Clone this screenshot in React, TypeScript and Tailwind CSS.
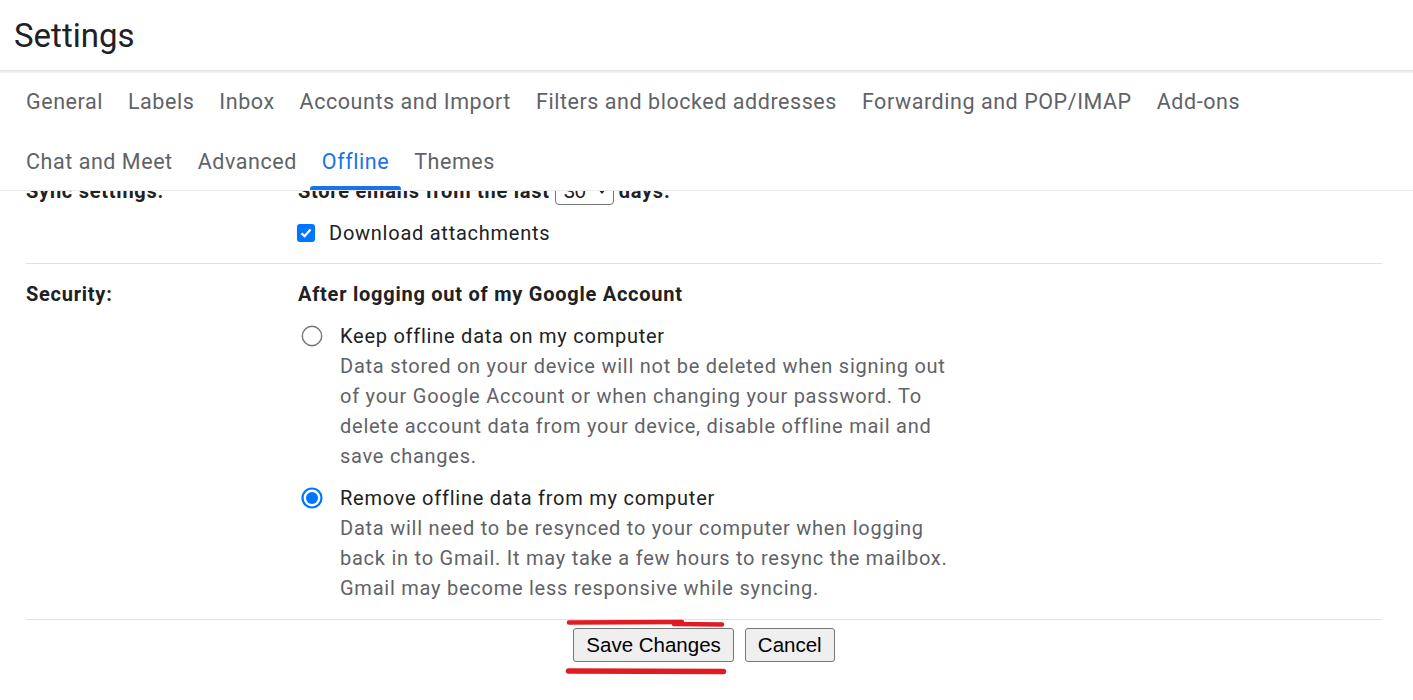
import React from "react";

const tabsRow1 = ["General", "Labels", "Inbox", "Accounts and Import", "Filters and blocked addresses", "Forwarding and POP/IMAP", "Add-ons"];
const tabsRow2 = ["Chat and Meet", "Advanced", "Offline", "Themes"];

function Tab({ label, active }: { label: string; active?: boolean }) {
  return (
    <div className="relative flex items-center px-[12px]">
      <span className={active ? "text-[#1a73e8]" : "text-[#5f6368]"}>{label}</span>
      {active && <div className="absolute left-0 right-0 bottom-0 h-[4px] rounded-t-[3px] bg-[#1a73e8]" />}
    </div>
  );
}

function Radio({ checked }: { checked?: boolean }) {
  return (
    <svg width="22" height="22" viewBox="0 0 22 22" className="shrink-0">
      {checked ? (
        <>
          <circle cx="11" cy="11" r="9.5" fill="white" stroke="#0075ff" strokeWidth="2.2" />
          <circle cx="11" cy="11" r="6" fill="#0075ff" />
        </>
      ) : (
        <circle cx="11" cy="11" r="9.7" fill="white" stroke="#767676" strokeWidth="1.4" />
      )}
    </svg>
  );
}

export default function App() {
  return (
    <div className="w-[1413px] h-[700px] overflow-hidden bg-white flex flex-col font-['Roboto',sans-serif]">
      <div className="h-[70px] shrink-0 flex items-center pl-[14px] text-[33px] text-[#202124] leading-none">
        Settings
      </div>
      <div className="h-[3px] shrink-0 bg-gradient-to-b from-[#e1e3e6] to-[#f4f5f6]" />
      <div className="shrink-0 border-b border-[#e8eaed] px-[14px] text-[21.5px] tracking-[0.55px]">
        <div className="h-[57px] pt-[2px] flex items-stretch gap-[1px]">
          {tabsRow1.map((t) => (
            <Tab key={t} label={t} />
          ))}
        </div>
        <div className="h-[60px] pt-[4px] flex items-stretch gap-[1px]">
          {tabsRow2.map((t) => (
            <Tab key={t} label={t} active={t === "Offline"} />
          ))}
        </div>
      </div>
      <div className="flex-1 overflow-hidden">
        <div className="ml-[26px] mr-[31px] text-[20px] leading-[30px] text-[#202124] tracking-[0.75px]">
          <div className="-mt-[31px] pt-[16px] pb-[15px] border-b border-[#e0e0e0] flex">
            <div className="w-[272px] shrink-0 font-bold">Sync settings:</div>
            <div className="flex flex-col gap-[12px]">
              <div className="flex items-center font-bold">
                <span>Store emails from the last</span>
                <div className="mx-[5px] w-[59px] h-[28px] border border-[#767676] rounded-[4px] flex items-center justify-between pl-[8px] pr-[7px] font-normal tracking-normal font-['Liberation_Sans',sans-serif] text-[20px]">
                  <span>30</span>
                  <svg width="8" height="5" viewBox="0 0 8 5">
                    <path d="M0 0 L8 0 L4 5 Z" fill="#202124" />
                  </svg>
                </div>
                <span>days.</span>
              </div>
              <div className="flex items-center">
                <div className="w-[18px] h-[18px] rounded-[3px] bg-[#0075ff] flex items-center justify-center shrink-0 -ml-[1px]">
                  <svg width="14" height="14" viewBox="0 0 14 14">
                    <path d="M2.5 7.3 L5.6 10.2 L11.5 3.6" fill="none" stroke="white" strokeWidth="2.3" />
                  </svg>
                </div>
                <span className="ml-[14px]">Download attachments</span>
              </div>
            </div>
          </div>
          <div className="pt-[15px] pb-[16px] border-b border-[#e0e0e0] flex">
            <div className="w-[272px] shrink-0 font-bold">Security:</div>
            <div className="flex flex-col">
              <div className="font-bold">After logging out of my Google Account</div>
              <div className="mt-[12px] flex items-center">
                <div className="ml-[3px] w-[22px] flex"><Radio /></div>
                <span className="ml-[17px]">Keep offline data on my computer</span>
              </div>
              <div className="ml-[42px] w-[615px] text-[#5f6368]">
                Data stored on your device will not be deleted when signing out of your Google Account or when changing your password. To delete account data from your device, disable offline mail and save changes.
              </div>
              <div className="mt-[12px] flex items-center">
                <div className="ml-[3px] w-[22px] flex"><Radio checked /></div>
                <span className="ml-[17px]">Remove offline data from my computer</span>
              </div>
              <div className="ml-[42px] w-[615px] text-[#5f6368]">
                Data will need to be resynced to your computer when logging back in to Gmail. It may take a few hours to resync the mailbox. Gmail may become less responsive while syncing.
              </div>
            </div>
          </div>
          <div className="pt-[8px] flex justify-center tracking-normal">
            <div className="relative flex gap-[11px] font-['Liberation_Sans',sans-serif] text-[20.5px] leading-none text-black">
              <button className="h-[34px] px-[12px] bg-[#efefef] border border-[#767676] rounded-[3px]">Save Changes</button>
              <button className="h-[34px] px-[12px] bg-[#efefef] border border-[#767676] rounded-[3px]">Cancel</button>
              <svg className="absolute pointer-events-none" style={{ left: -10, top: -10 }} width="180" height="60" viewBox="0 0 180 60">
                <path d="M6 4.5 L119 4" stroke="#e01b22" strokeWidth="4.5" strokeLinecap="round" fill="none" />
                <path d="M111 6 L159 6.5" stroke="#e01b22" strokeWidth="4.5" strokeLinecap="round" fill="none" />
                <path d="M5.5 53 L160.5 53.5" stroke="#e01b22" strokeWidth="5.5" strokeLinecap="round" fill="none" />
              </svg>
            </div>
          </div>
        </div>
      </div>
    </div>
  );
}
